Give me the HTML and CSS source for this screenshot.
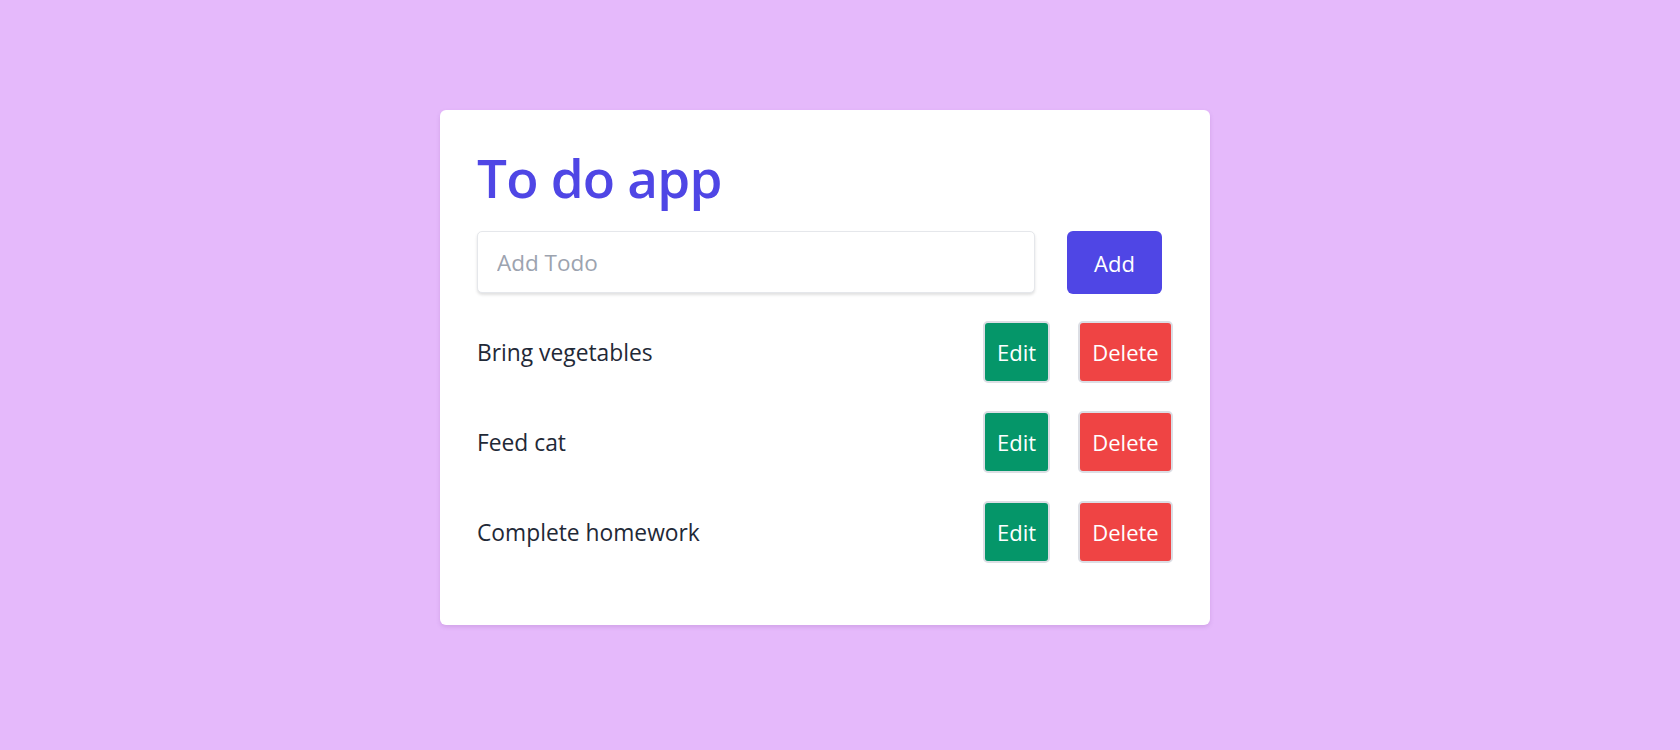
FILE: index.html
```html
<!DOCTYPE html>
<html lang="en">
<head>
<meta charset="utf-8">
<title>To do app</title>
<link rel="stylesheet" href="styles.css">
</head>
<body>
<main class="card">
  <h1 class="title">To do app</h1>
  <form class="add-row">
    <input class="add-input" type="text" placeholder="Add Todo">
    <button class="btn btn-add" type="button">Add</button>
  </form>
  <ul class="list">
    <li class="item">
      <span class="item-text">Bring vegetables</span>
      <div class="actions">
        <button class="btn btn-edit" type="button">Edit</button>
        <button class="btn btn-delete" type="button">Delete</button>
      </div>
    </li>
    <li class="item">
      <span class="item-text">Feed cat</span>
      <div class="actions">
        <button class="btn btn-edit" type="button">Edit</button>
        <button class="btn btn-delete" type="button">Delete</button>
      </div>
    </li>
    <li class="item">
      <span class="item-text">Complete homework</span>
      <div class="actions">
        <button class="btn btn-edit" type="button">Edit</button>
        <button class="btn btn-delete" type="button">Delete</button>
      </div>
    </li>
  </ul>
</main>
</body>
</html>
```

FILE: styles.css
```css
* { box-sizing: border-box; }

html, body {
  margin: 0;
  padding: 0;
}

body {
  background: #e5b9fb;
  font-family: "Open Sans", "Noto Sans", "Liberation Sans", sans-serif;
  color: #1f2937;
  min-height: 750px;
  padding-top: 110px;
}

.card {
  width: 770px;
  margin-left: 440px;
  background: #ffffff;
  border-radius: 6px;
  box-shadow: 0 2px 4px rgba(120, 60, 150, 0.18);
  padding: 40px 37px 62px 37px;
}

.title {
  margin: 0;
  font-size: 53px;
  line-height: 55px;
  font-weight: 600;
  letter-spacing: -0.8px;
  color: #4f46e5;
}

.add-row {
  display: flex;
  gap: 32px;
  margin-top: 26px;
}

.add-input {
  width: 558px;
  height: 62px;
  border: 1px solid #e5e7eb;
  border-radius: 5px;
  box-shadow: 0 2px 3px rgba(0, 0, 0, 0.12);
  padding: 0 19px;
  font-family: inherit;
  font-size: 22.5px;
  color: #1f2937;
  outline: none;
}

.add-input::placeholder {
  color: #9ca3af;
}

.btn {
  font-family: inherit;
  font-size: 22px;
  color: #ffffff;
  height: 62px;
  cursor: pointer;
  padding: 0;
}

.btn-add {
  width: 95px;
  height: 63px;
  border: none;
  border-radius: 6px;
  background: #4f46e5;
}

.list {
  list-style: none;
  margin: 27px 0 0 0;
  padding: 0;
  display: flex;
  flex-direction: column;
  gap: 28px;
}

.item {
  display: flex;
  align-items: center;
  justify-content: space-between;
  height: 62px;
}

.item-text {
  font-size: 22.8px;
}

.actions {
  display: flex;
  gap: 28px;
}

.btn-edit,
.btn-delete {
  border: 2px solid #dcdee4;
  border-radius: 5px;
}

.btn-edit {
  width: 67px;
  background: #059669;
}

.btn-delete {
  width: 95px;
  background: #ef4444;
}
```
